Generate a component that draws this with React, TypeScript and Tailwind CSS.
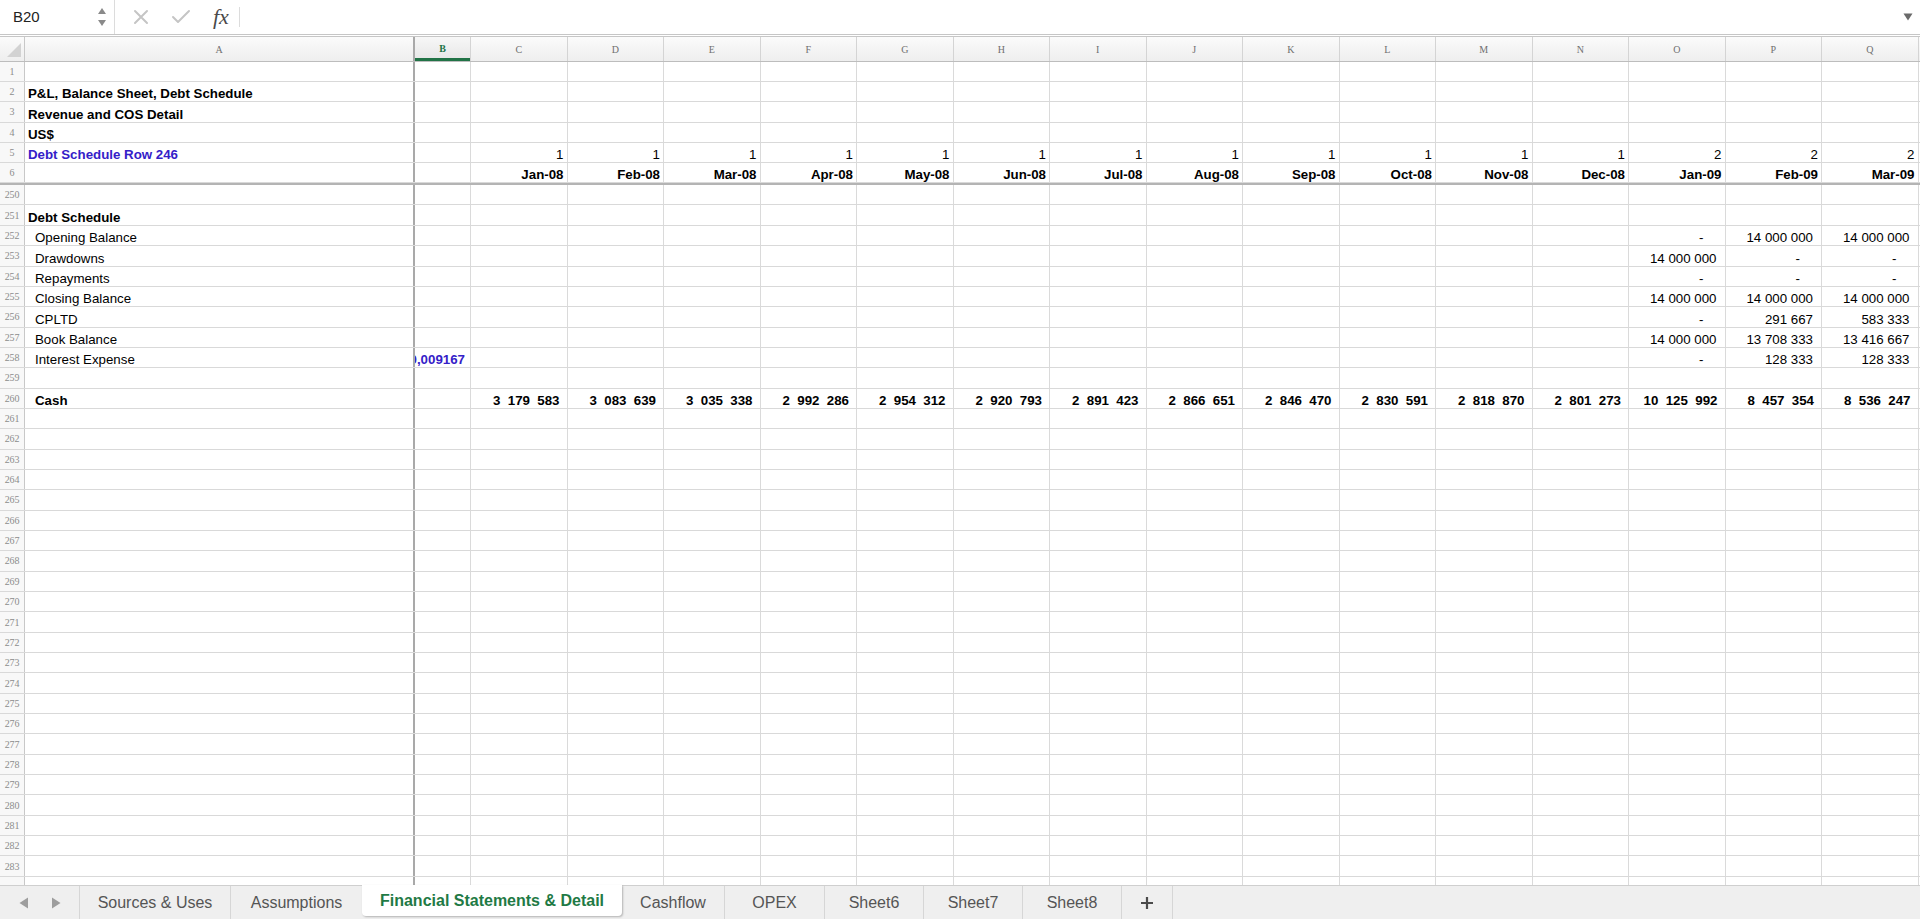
import React from "react";

const LETTERS = ["C", "D", "E", "F", "G", "H", "I", "J", "K", "L", "M", "N", "O", "P", "Q"];
const NB = "\u00a0";
const sp1 = (s: string) => s.replace(/ /g, NB);
const sp2 = (s: string) => s.replace(/ /g, NB + NB);

type Kind = "hdr1" | "hdr2" | "num" | "cash";
type ACell = { t: string; bold?: boolean; blue?: boolean; indent?: boolean };
type RowDef = { a?: ACell; b?: string; vals?: (string | null)[]; kind?: Kind };

const blank12: (string | null)[] = Array(12).fill(null);

const topRows: Record<number, RowDef> = {
  1: {},
  2: { a: { t: "P&L, Balance Sheet, Debt Schedule", bold: true } },
  3: { a: { t: "Revenue and COS Detail", bold: true } },
  4: { a: { t: "US$", bold: true } },
  5: {
    a: { t: "Debt Schedule Row 246", bold: true, blue: true },
    kind: "hdr1",
    vals: ["1", "1", "1", "1", "1", "1", "1", "1", "1", "1", "1", "1", "2", "2", "2"],
  },
  6: {
    kind: "hdr2",
    vals: [
      "Jan-08", "Feb-08", "Mar-08", "Apr-08", "May-08", "Jun-08", "Jul-08", "Aug-08",
      "Sep-08", "Oct-08", "Nov-08", "Dec-08", "Jan-09", "Feb-09", "Mar-09",
    ],
  },
};

const lowRows: Record<number, RowDef> = {
  251: { a: { t: "Debt Schedule", bold: true } },
  252: { a: { t: "Opening Balance", indent: true }, kind: "num", vals: [...blank12, "-", "14 000 000", "14 000 000"] },
  253: { a: { t: "Drawdowns", indent: true }, kind: "num", vals: [...blank12, "14 000 000", "-", "-"] },
  254: { a: { t: "Repayments", indent: true }, kind: "num", vals: [...blank12, "-", "-", "-"] },
  255: { a: { t: "Closing Balance", indent: true }, kind: "num", vals: [...blank12, "14 000 000", "14 000 000", "14 000 000"] },
  256: { a: { t: "CPLTD", indent: true }, kind: "num", vals: [...blank12, "-", "291 667", "583 333"] },
  257: { a: { t: "Book Balance", indent: true }, kind: "num", vals: [...blank12, "14 000 000", "13 708 333", "13 416 667"] },
  258: { a: { t: "Interest Expense", indent: true }, b: "0,009167", kind: "num", vals: [...blank12, "-", "128 333", "128 333"] },
  260: {
    a: { t: "Cash", bold: true, indent: true },
    kind: "cash",
    vals: [
      "3 179 583", "3 083 639", "3 035 338", "2 992 286", "2 954 312", "2 920 793", "2 891 423",
      "2 866 651", "2 846 470", "2 830 591", "2 818 870", "2 801 273", "10 125 992", "8 457 354", "8 536 247",
    ],
  },
};

function ValCell({ v, kind }: { v: string | null; kind?: Kind }) {
  const base =
    "w-[96.5px] shrink-0 h-full border-r border-[#dadada] flex items-end justify-end overflow-hidden whitespace-pre leading-[15px]";
  if (v == null || !kind) return <div className={base} />;
  if (kind === "hdr1") return <div className={`${base} pr-[3px]`}>{v}</div>;
  if (kind === "hdr2") return <div className={`${base} pr-[3px] font-bold`}>{v}</div>;
  if (kind === "cash") return <div className={`${base} pr-[7px] font-bold`}>{sp2(v)}</div>;
  if (v === "-") return <div className={`${base} pr-[21px]`}>-</div>;
  return <div className={`${base} pr-[8px]`}>{sp1(v)}</div>;
}

function ACellView({ a }: { a?: ACell }) {
  const base =
    "w-[390px] shrink-0 h-full border-r-2 border-[#a9a9a9] flex items-end overflow-hidden whitespace-pre leading-[15px]";
  if (!a) return <div className={base} />;
  const pad = a.indent ? "pl-[10px]" : "pl-[3px]";
  const weight = a.bold ? "font-bold" : "";
  const color = a.blue ? "text-[#3420c8]" : "";
  return <div className={`${base} ${pad} ${weight} ${color}`}>{a.t}</div>;
}

function SheetRow({ num, def, top, hideNum }: { num: number; def: RowDef; top?: boolean; hideNum?: boolean }) {
  const vals = def.vals ?? Array(15).fill(null);
  return (
    <div className={`flex shrink-0 border-b border-[#d9d9d9] ${top ? "h-[20.2px]" : "h-[20.35px]"}`}>
      <div className="w-[25px] shrink-0 h-full bg-[#f8f8f8] border-r border-[#c8c8c8] flex items-center justify-center font-['Liberation_Serif',serif] text-[10px] text-[#8c8c8c] tracking-[-0.2px]">
        {hideNum ? null : num}
      </div>
      <ACellView a={def.a} />
      <div className="w-[56px] shrink-0 h-full border-r border-[#dadada] flex items-end justify-end overflow-hidden whitespace-pre leading-[15px] pr-[5px]">
        {def.b ? <span className="font-bold text-[#3420c8] shrink-0">{def.b}</span> : null}
      </div>
      {vals.map((v, i) => (
        <ValCell key={i} v={v} kind={def.kind} />
      ))}
    </div>
  );
}

function FormulaBar() {
  return (
    <div className="h-[37px] shrink-0 flex items-stretch border-b-[3px] border-double border-[#c6c6c6] bg-white">
      <div className="w-[115px] shrink-0 flex items-center justify-between pl-[13px] pr-[7px] border-r border-[#dcdcdc]">
        <span className="text-[15px] text-[#222] font-['Liberation_Sans',sans-serif]">B20</span>
        <svg width="10" height="22" viewBox="0 0 10 22">
          <path d="M1 8 L5 2 L9 8 Z" fill="#8a8a8a" />
          <path d="M1 14 L5 20 L9 14 Z" fill="#8a8a8a" />
        </svg>
      </div>
      <div className="flex items-center pl-[18px]">
        <svg width="16" height="16" viewBox="0 0 16 16">
          <path d="M2 2 L14 14 M14 2 L2 14" stroke="#c5c5c5" strokeWidth="2" strokeLinecap="round" />
        </svg>
        <svg width="20" height="16" viewBox="0 0 20 16" className="ml-[22px]">
          <path d="M2 8 L7 13 L18 2" stroke="#c5c5c5" strokeWidth="2" fill="none" strokeLinecap="round" strokeLinejoin="round" />
        </svg>
        <span className="ml-[22px] font-['Liberation_Serif',serif] italic text-[22px] text-[#4a4a4a] leading-none">fx</span>
        <div className="ml-[10px] w-px h-[20px] bg-[#dcdcdc]" />
      </div>
      <div className="flex-1" />
      <div className="flex items-center pr-[7px]">
        <svg width="10" height="8" viewBox="0 0 10 8">
          <path d="M0.5 0.5 L9.5 0.5 L5 7.5 Z" fill="#6a6a6a" />
        </svg>
      </div>
    </div>
  );
}

function ColumnHeaders() {
  const hdr =
    "shrink-0 h-full border-r border-[#d4d4d4] flex items-center justify-center font-['Liberation_Serif',serif] text-[10px] text-[#707070]";
  return (
    <div className="h-[25px] shrink-0 flex border-b border-[#bdbdbd] bg-gradient-to-b from-[#fbfbfb] to-[#eeeeee]">
      <div className="w-[25px] shrink-0 h-full border-r border-[#c8c8c8] flex items-end justify-end pr-[3px] pb-[4px]">
        <svg width="14" height="14" viewBox="0 0 14 14">
          <path d="M14 0 L14 14 L0 14 Z" fill="#d2d2d2" />
        </svg>
      </div>
      <div className={`w-[390px] ${hdr} border-r-2 border-r-[#a9a9a9]`}>A</div>
      <div className="w-[56px] shrink-0 h-full border-r border-[#d4d4d4] flex flex-col bg-gradient-to-b from-[#f7f7f7] to-[#e6e6e6]">
        <div className="flex-1 flex items-center justify-center font-['Liberation_Serif',serif] font-bold text-[10px] text-[#217346] pt-[2px]">
          B
        </div>
        <div className="h-[3px] bg-[#217346]" />
      </div>
      {LETTERS.map((l) => (
        <div key={l} className={`w-[96.5px] ${hdr}`}>
          {l}
        </div>
      ))}
    </div>
  );
}

function TabBar() {
  const tab =
    "shrink-0 h-full flex items-center justify-center whitespace-nowrap border-r border-[#d6d6d6] text-[16px] text-[#555]";
  return (
    <div className="h-[34px] shrink-0 flex bg-[#efefef] border-t border-[#cfcfcf]">
      <div className="w-[80px] shrink-0 h-full flex items-center border-r border-[#d6d6d6]">
        <svg width="10" height="12" viewBox="0 0 10 12" className="ml-[19px]">
          <path d="M9 0.5 L9 11.5 L0.5 6 Z" fill="#9d9d9d" />
        </svg>
        <svg width="10" height="12" viewBox="0 0 10 12" className="ml-[22px]">
          <path d="M1 0.5 L1 11.5 L9.5 6 Z" fill="#9d9d9d" />
        </svg>
      </div>
      <div className={`${tab} w-[151px]`}>Sources &amp; Uses</div>
      <div className="shrink-0 h-full w-[131px] flex items-center justify-center whitespace-nowrap text-[16px] text-[#555]">
        Assumptions
      </div>
      <div className="shrink-0 -mt-px h-[31px] w-[260px] flex items-center justify-center whitespace-nowrap bg-white rounded-b-[4px] shadow-[1px_1px_2px_rgba(0,0,0,0.25)] text-[16px] font-bold text-[#1f7a45] relative z-10">
        Financial Statements &amp; Detail
      </div>
      <div className={`${tab} w-[103px]`}>Cashflow</div>
      <div className={`${tab} w-[100px]`}>OPEX</div>
      <div className={`${tab} w-[99px]`}>Sheet6</div>
      <div className={`${tab} w-[99px]`}>Sheet7</div>
      <div className={`${tab} w-[99px]`}>Sheet8</div>
      <div className="shrink-0 h-full w-[51px] flex items-center justify-center border-r border-[#d6d6d6]">
        <svg width="14" height="14" viewBox="0 0 14 14">
          <path d="M7 1 L7 13 M1 7 L13 7" stroke="#4a4a4a" strokeWidth="2.2" />
        </svg>
      </div>
    </div>
  );
}

export default function App() {
  const low: number[] = [];
  for (let r = 250; r <= 284; r++) low.push(r);
  return (
    <div className="w-[1920px] h-[919px] overflow-hidden flex flex-col bg-white text-black font-['Liberation_Sans',Arial,sans-serif] text-[13.3px]">
      <FormulaBar />
      <ColumnHeaders />
      <div className="flex-1 overflow-hidden flex flex-col">
        {[1, 2, 3, 4, 5, 6].map((r) => (
          <SheetRow key={r} num={r} def={topRows[r]} top />
        ))}
        <div className="h-[2px] shrink-0 bg-[#b4b4b4]" />
        {low.map((r) => (
          <SheetRow key={r} num={r} def={lowRows[r] ?? {}} hideNum={r === 284} />
        ))}
      </div>
      <TabBar />
    </div>
  );
}
